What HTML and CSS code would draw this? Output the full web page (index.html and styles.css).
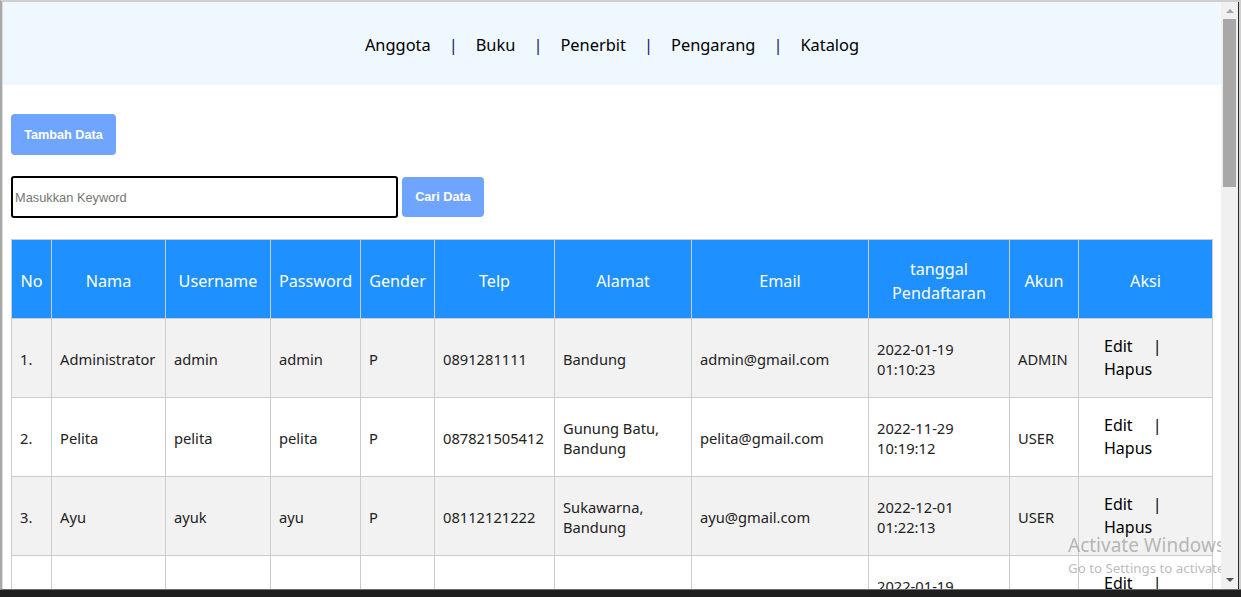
FILE: index.html
```html
<!DOCTYPE html>
<html lang="id">
<head>
<meta charset="utf-8">
<title>Data Anggota</title>
<link rel="stylesheet" href="styles.css">
</head>
<body>
<div class="screen">
  <div class="window">
    <div class="viewport">
      <nav class="topnav">
        <a class="nav-link" href="#">Anggota</a><span class="nav-sep">|</span>
        <a class="nav-link" href="#">Buku</a><span class="nav-sep">|</span>
        <a class="nav-link" href="#">Penerbit</a><span class="nav-sep">|</span>
        <a class="nav-link" href="#">Pengarang</a><span class="nav-sep">|</span>
        <a class="nav-link" href="#">Katalog</a>
      </nav>
      <main class="content">
        <button class="btn btn-add" type="button">Tambah Data</button>
        <form class="search">
          <input class="search-input" type="text" placeholder="Masukkan Keyword" autofocus>
          <button class="btn btn-search" type="button">Cari Data</button>
        </form>
        <table class="data">
          <colgroup>
            <col class="c-no"><col class="c-nama"><col class="c-user"><col class="c-pass"><col class="c-gender"><col class="c-telp"><col class="c-alamat"><col class="c-email"><col class="c-tgl"><col class="c-akun"><col class="c-aksi">
          </colgroup>
          <thead>
            <tr>
              <th>No</th><th>Nama</th><th>Username</th><th>Password</th><th>Gender</th><th>Telp</th><th>Alamat</th><th>Email</th><th>tanggal Pendaftaran</th><th>Akun</th><th>Aksi</th>
            </tr>
          </thead>
          <tbody>
            <tr>
              <td>1.</td><td>Administrator</td><td>admin</td><td>admin</td><td>P</td><td>0891281111</td><td>Bandung</td><td>admin@gmail.com</td><td>2022-01-19<br>01:10:23</td><td>ADMIN</td>
              <td class="aksi"><a href="#">Edit</a><span class="sep">|</span><br><a href="#">Hapus</a></td>
            </tr>
            <tr>
              <td>2.</td><td>Pelita</td><td>pelita</td><td>pelita</td><td>P</td><td>087821505412</td><td>Gunung Batu,<br>Bandung</td><td>pelita@gmail.com</td><td>2022-11-29<br>10:19:12</td><td>USER</td>
              <td class="aksi"><a href="#">Edit</a><span class="sep">|</span><br><a href="#">Hapus</a></td>
            </tr>
            <tr>
              <td>3.</td><td>Ayu</td><td>ayuk</td><td>ayu</td><td>P</td><td>08112121222</td><td>Sukawarna,<br>Bandung</td><td>ayu@gmail.com</td><td>2022-12-01<br>01:22:13</td><td>USER</td>
              <td class="aksi"><a href="#">Edit</a><span class="sep">|</span><br><a href="#">Hapus</a></td>
            </tr>
            <tr>
              <td>4.</td><td>Budi</td><td>budi</td><td>budi</td><td>L</td><td>08123456789</td><td>Bandung</td><td>budi@gmail.com</td><td>2022-01-19<br>02:11:40</td><td>USER</td>
              <td class="aksi"><a href="#">Edit</a><span class="sep">|</span><br><a href="#">Hapus</a></td>
            </tr>
          </tbody>
        </table>
      </main>
      <div class="watermark">
        <div class="wm-title">Activate Windows</div>
        <div class="wm-sub">Go to Settings to activate Windows.</div>
      </div>
    </div>
    <div class="scrollbar">
      <span class="arrow-up"></span>
      <span class="thumb"></span>
      <span class="arrow-down"></span>
    </div>
    <div class="edge"></div>
  </div>
  <div class="taskbar"></div>
</div>
</body>
</html>
```
FILE: styles.css
```css
* { box-sizing: border-box; }

html, body {
  margin: 0;
  padding: 0;
}

body {
  width: 1241px;
  height: 597px;
  overflow: hidden;
  background: #1f1f1f;
  font-family: "Noto Sans", "Open Sans", sans-serif;
}

.screen {
  display: flex;
  flex-direction: column;
  height: 597px;
}

.window {
  height: 590px;
  display: flex;
  border-top: 2px solid #cfcfcf;
  border-left: 2px solid #a8a8a8;
  border-bottom: 1px solid #6e6e6e;
  background: #ffffff;
}

.viewport {
  position: relative;
  flex: 1;
  overflow: hidden;
  border-left: 1px solid #dcdcdc;
  background: #ffffff;
}

.topnav {
  height: 83px;
  background: #eff7ff;
  display: flex;
  align-items: center;
  justify-content: center;
  padding-top: 1px;
  font-size: 16.4px;
}

.nav-link {
  color: #000;
  text-decoration: none;
}

.nav-sep {
  color: #16166a;
  margin: 0 18px;
}

.content {
  padding: 29px 8px 0;
}

.btn {
  border: none;
  border-radius: 4px;
  background: #70a5ff;
  color: #ffffff;
  font-family: "Liberation Sans", Arial, sans-serif;
  font-weight: bold;
  font-size: 12.7px;
  cursor: pointer;
}

.btn-add {
  display: block;
  height: 41px;
  width: 105px;
  padding: 0;
}

.search {
  display: flex;
  align-items: center;
  gap: 4px;
  margin: 21px 0 0;
}

.search-input {
  width: 387px;
  height: 42px;
  border: 2px solid #000;
  border-radius: 3px;
  padding: 0 2px;
  font-family: "Liberation Sans", Arial, sans-serif;
  font-size: 12.8px;
  outline: none;
}

.search-input::placeholder {
  color: #767676;
}

.btn-search {
  width: 82px;
  height: 40px;
}

.data {
  margin-top: 21px;
  width: 1201px;
  table-layout: fixed;
  border-collapse: collapse;
  font-size: 14.7px;
  color: #222;
}

.c-no { width: 40px; }
.c-nama { width: 114px; }
.c-user { width: 105px; }
.c-pass { width: 90px; }
.c-gender { width: 74px; }
.c-telp { width: 120px; }
.c-alamat { width: 137px; }
.c-email { width: 177px; }
.c-tgl { width: 141px; }
.c-akun { width: 69px; }
.c-aksi { width: 134px; }

.data th,
.data td {
  border: 1px solid #cccccc;
  vertical-align: middle;
}

.data th {
  background: #1e90ff;
  color: #ffffff;
  font-weight: normal;
  font-size: 16.2px;
  line-height: 24px;
  padding: 17px 4px 13px;
  text-align: center;
  height: 79px;
}

.data td {
  padding: 17px 8px 15px;
  line-height: 20px;
  height: 79px;
  white-space: nowrap;
}

.data tbody tr:nth-child(odd) td {
  background: #f2f2f2;
}

.data tbody tr:nth-child(even) td {
  background: #ffffff;
}

.aksi {
  font-size: 16px;
  color: #000;
}

.data td.aksi {
  line-height: 23px;
  padding-left: 25px;
  padding-top: 16px;
  padding-bottom: 16px;
}

.aksi a {
  color: #000;
  text-decoration: none;
}

.aksi .sep {
  color: #000;
  margin-left: 20px;
}

.watermark {
  position: absolute;
  left: 1065px;
  top: 530px;
  color: rgba(140, 140, 140, 0.6);
  white-space: nowrap;
  pointer-events: none;
}

.wm-title {
  font-size: 19px;
  line-height: 26px;
}

.wm-sub {
  font-size: 13.3px;
  line-height: 21px;
}

.scrollbar {
  width: 17px;
  background: #f0f0f0;
  display: flex;
  flex-direction: column;
  align-items: center;
  padding: 7px 0 7px;
}

.arrow-up {
  width: 0;
  height: 0;
  border-left: 4px solid transparent;
  border-right: 4px solid transparent;
  border-bottom: 4px solid #a3a3a3;
}

.thumb {
  width: 13px;
  height: 168px;
  margin-top: 6px;
  background: #a8a8a8;
}

.arrow-down {
  margin-top: auto;
  width: 0;
  height: 0;
  border-left: 4px solid transparent;
  border-right: 4px solid transparent;
  border-top: 4px solid #505050;
}

.edge {
  width: 3px;
  background: linear-gradient(to right, #2a2a2a 0 1px, #d0d0d0 1px);
}

.taskbar {
  flex: 1;
  background: #1f1f1f;
}
```
